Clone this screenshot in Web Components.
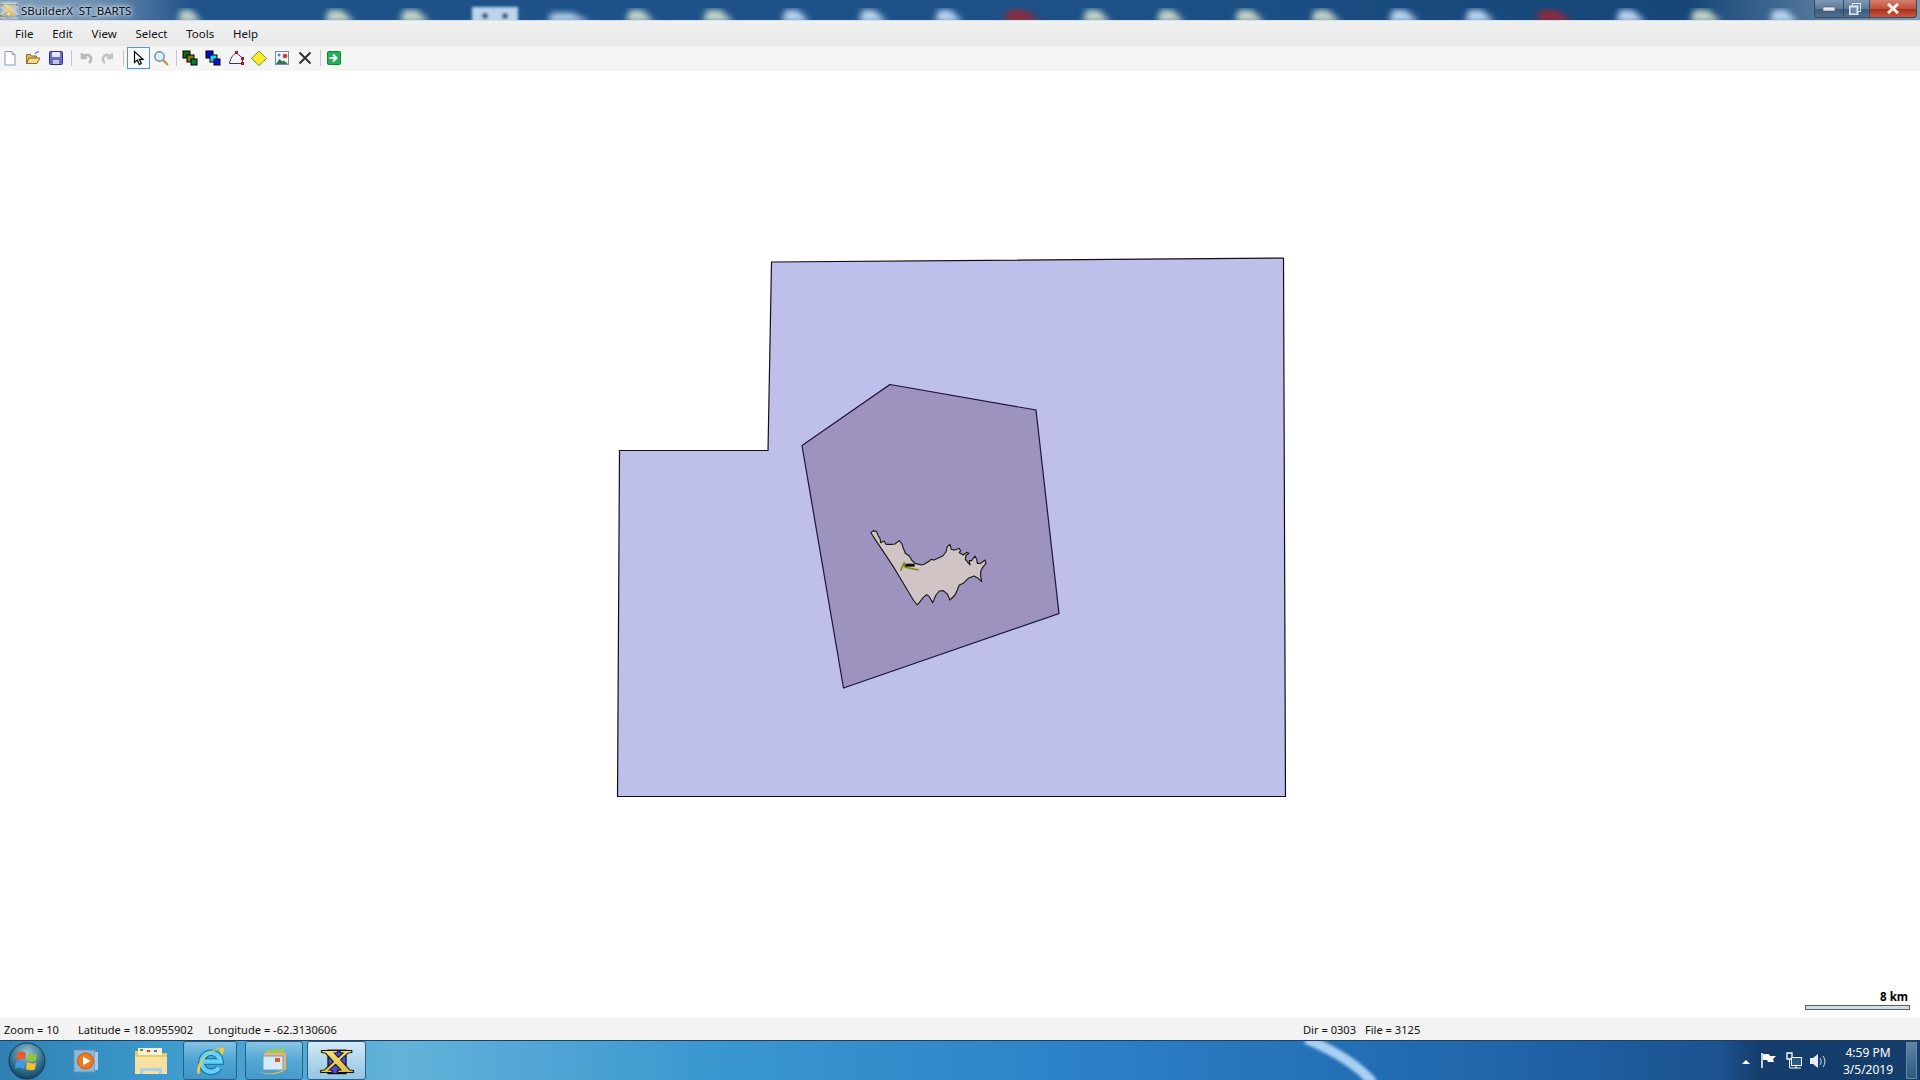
<!DOCTYPE html>
<html>
<head>
<meta charset="utf-8">
<title>SBuilderX</title>
<style>
  html, body { margin: 0; height: 100%; overflow: hidden; background: #fff; }
  body { display: flex; flex-direction: column; width: 1920px; height: 1080px; font: 11px "Noto Sans", "Open Sans", sans-serif; color: #111; }
</style>
</head>
<body>
<sb-titlebar>SBuilderX&nbsp; ST_BARTS</sb-titlebar>
<sb-menubar></sb-menubar>
<sb-toolbar></sb-toolbar>
<sb-map></sb-map>
<sb-statusbar></sb-statusbar>
<win-taskbar></win-taskbar>

<script>
const logoX = (size) => `
  <svg width="${size}" height="${size}" viewBox="0 0 20 20">
    <defs><linearGradient id="gold" x1="0" y1="0" x2="0" y2="1"><stop offset="0" stop-color="#fbee8c"/><stop offset="1" stop-color="#d8b030"/></linearGradient></defs>
    <rect x="5" y="4" width="10" height="13" fill="#4c4ce0" stroke="#111" stroke-width=".7"/>
    <text transform="translate(10 16.300) scale(1.400 1)" text-anchor="middle" font-family="Liberation Serif" font-weight="700" font-size="18"
      fill="url(#gold)" stroke="#111" stroke-width="1" paint-order="stroke">X</text>
  </svg>`;

customElements.define("sb-titlebar", class extends HTMLElement {
  constructor() {
    super();
    this.shadow = this.attachShadow({ mode: "open" });
  }
  connectedCallback() {
    // blurred desktop icons showing through the aero glass
    const blobs = [[178,24,"g"],[325,30,"g"],[400,30,"g"],[547,44,"b",13],[626,29,"g"],[703,31,"g"],[782,28,"b"],[859,28,"b"],[935,28,"b"],[1004,38,"r"],[1083,28,"g"],[1157,28,"g"],[1235,30,"g"],[1311,30,"g"],[1389,30,"b"],[1465,30,"b"],[1536,37,"r"],[1616,30,"b"],[1690,32,"g"],[1770,28,"b"]];
    const fill = { g: "#c4d6c8", b: "#bcd6f4", r: "#8c2c3c" };
    const shapes = blobs.map(([x, w, c, top = 10]) =>
      `<polygon points="${x},22 ${x + w * 0.12},${top} ${x + w * 0.55},${top} ${x + w},22" fill="${fill[c]}"/>`).join("");
    this.shadow.innerHTML = `
      <style>
        :host { display: flex; height: 20px; flex: none; position: relative; overflow: hidden;
          background: linear-gradient(90deg, #7f9cb8 0, #6e8fb0 5%, #1f5289 10%, #1c5086 60%, #164577 88%, #5f82a2 96%, #7d99b2 100%);
          border-bottom: 1px solid #d4e0ea; box-sizing: content-box; }
        svg.glass { position: absolute; inset: 0; }
        .title { position: relative; display: flex; align-items: center; gap: 2px; height: 20px;
          font-size: 11.500px; color: #08101c; text-shadow: 0 0 6px #dfe8f0, 0 0 6px #dfe8f0, 0 0 3px #dfe8f0; }
        .title svg { flex: none; }
        .btns { position: absolute; right: 3px; top: 0; display: flex; height: 18px; }
        .btn { display: flex; align-items: center; justify-content: center; box-sizing: border-box; height: 18px;
          border: 1px solid #3a4a5c; border-top: 0; background: linear-gradient(#7d98b2, #5e7b98 50%, #3c5a7a 55%, #50708e); }
        .min { width: 29px; border-radius: 0 0 0 4px; border-right: 0; }
        .max { width: 26px; border-right: 0; padding-right: 4px; }
        .close { width: 48px; border-radius: 0 0 4px 0; background: linear-gradient(#d2806e, #c0503c 50%, #a8301c 55%, #c85a40); }
      </style>
      <svg class="glass" width="1920" height="21"><defs><filter id="b"><feGaussianBlur stdDeviation="3"/></filter><filter id="s"><feGaussianBlur stdDeviation="1.500"/></filter></defs>
        <g filter="url(#b)">${shapes}</g>
        <g filter="url(#s)"><rect x="472" y="7" width="46" height="16" fill="#bcd4f0"/><circle cx="485" cy="16" r="3" fill="#3c4a5c"/><circle cx="505" cy="16" r="3" fill="#3c4a5c"/></g>
      </svg>
      <div class="title">${logoX(19)}<slot></slot></div>
      <div class="btns">
        <div class="btn min"><svg width="12" height="6"><rect width="12" height="4" y="1" fill="#e6e6e6" stroke="#445" stroke-width=".5"/></svg></div>
        <div class="btn max"><svg width="12" height="12" fill="none" stroke="#dfe6ea"><rect x="3.500" y=".5" width="8" height="8"/><rect x=".5" y="3.500" width="8" height="8" fill="#6f8aa4" stroke-width="2"/></svg></div>
        <div class="btn close"><svg width="14" height="11" stroke="#f4f0ee" stroke-width="3"><path d="M2 1 L12 10 M12 1 L2 10"/></svg></div>
      </div>`;
  }
});

customElements.define("sb-menubar", class extends HTMLElement {
  constructor() {
    super();
    this.shadow = this.attachShadow({ mode: "open" });
  }
  connectedCallback() {
    const items = ["File", "Edit", "View", "Select", "Tools", "Help"];
    this.shadow.innerHTML = `
      <style>
        :host { display: flex; flex: none; height: 25px; align-items: center; gap: 18.800px; padding-left: 15px;
          background: linear-gradient(#f0f0f0, #e9e9e9); color: #111; font-size: 11.500px; }
      </style>
      ${items.map(t => `<span>${t}</span>`).join("")}`;
  }
});

customElements.define("sb-toolbar", class extends HTMLElement {
  constructor() {
    super();
    this.shadow = this.attachShadow({ mode: "open" });
  }
  connectedCallback() {
    const icons = {
      newf: `<path d="M3 1.500h7l3 3v10.500H3z" fill="#fff" stroke="#8a9ab0"/><path d="M10 1.500v3h3" fill="#dde6f0" stroke="#8a9ab0"/>`,
      open: `<path d="M1.500 13.500v-9h4l1 1.500h5v7.500z" fill="#e0b860" stroke="#8a6a2a"/><path d="M1.500 13.500l2.500-5.500h11l-3 5.500z" fill="#f6d98a" stroke="#8a6a2a"/><path d="M10 4c1-2 2.500-2.500 4-2" fill="none" stroke="#4a78c0" stroke-width="1.200"/>`,
      save: `<rect x="1.500" y="1.500" width="13" height="13" rx="1" fill="#6a6ac4" stroke="#30307a"/><rect x="4" y="2" width="8" height="5" fill="#e8e8f4"/><rect x="5" y="10" width="6" height="4" fill="#c8c8d8"/>`,
      undo: `<path d="M4 3v5h5M4.500 8C6 4 12 4 13 8c.5 2-.5 4-2 5" fill="none" stroke="#b8b8b8" stroke-width="2.400"/>`,
      redo: `<path d="M12 3v5H7M11.500 8C10 4 4 4 3 8c-.5 2 .5 4 2 5" fill="none" stroke="#c4c4c4" stroke-width="2.400"/>`,
      arrow: `<path d="M4.500 1.500v11l2.800-2.400 2 4.400 2-1-2-4.200h3.700z" fill="#fff" stroke="#000" stroke-width="1.200"/>`,
      zoom: `<circle cx="6.500" cy="6.500" r="4.700" fill="#d8ecfa" stroke="#6a8aa8" stroke-width="1.400"/><path d="M10 10l5 5" stroke="#c09048" stroke-width="2.400"/>`,
      layerg: `<rect x="1" y="1" width="7" height="7" fill="#0a6a1a" stroke="#000"/><rect x="5" y="5" width="7" height="7" fill="#7a7a10" stroke="#000"/><rect x="9" y="9" width="6" height="6" fill="#0a7a2a" stroke="#000"/>`,
      layerb: `<rect x="1" y="1" width="7" height="7" fill="#0808d8" stroke="#000"/><rect x="5" y="5" width="7" height="7" fill="#10e0f0" stroke="#000"/><rect x="9" y="9" width="6" height="6" fill="#1010e0" stroke="#000"/>`,
      poly: `<path d="M1.500 13.500C2 9 5 4 8.500 3L14.500 8v5.500z" fill="none" stroke="#3030a0"/><rect x="7" y="1" width="3" height="3" fill="#c01020"/><rect x="13" y="7" width="3" height="3" fill="#c01020"/><rect x="13" y="12" width="3" height="3" fill="#c01020"/>`,
      diamond: `<path d="M8 1L15.500 8.500 8 15.500.5 8.500z" fill="#f6ec30" stroke="#8a8a20"/>`,
      image: `<rect x="1.500" y="1.500" width="13" height="13" fill="#f4f4fa" stroke="#7a8aa0"/><circle cx="11" cy="6" r="2.300" fill="#d04040"/><path d="M2 14l3.500-5 3 2.500 1.500-1 4 3.500z" fill="#2a7a5a"/><circle cx="5" cy="5" r="1.500" fill="#5a8ad0"/>`,
      del: `<path d="M2.500 2.500l11 11M13.500 2.500l-11 11" stroke="#333" stroke-width="2"/>`,
      go: `<rect x="1.500" y="1.500" width="13" height="13" rx="1" fill="#1fb050" stroke="#0a8a3a"/><path d="M3.500 8h5M7 4.500L10.500 8 7 11.500" fill="none" stroke="#fff" stroke-width="2"/>`
    };
    // name, left gap in px before the button
    const row = [["newf",-1.5],["open",0],["save",0],["sep"],["undo",0],["redo",-1],["sep"],["arrow",0],["zoom",0],["sep"],["layerg",-1],["layerb",0],["poly",0],["diamond",0],["image",0],["del",0],["sep"],["go",-1]];
    const html = row.map(([n, gap]) => {
      if (n === "sep") return `<i></i>`;
      return `<span class="${n === "arrow" ? "on" : ""}" style="margin-left:${gap}px"><svg width="16" height="16" viewBox="0 0 16 16">${icons[n]}</svg></span>`;
    }).join("");
    this.shadow.innerHTML = `
      <style>
        :host { display: flex; flex: none; height: 25px; box-sizing: border-box; padding-bottom: 2px; align-items: center;
          background: #f5f5f5; }
        span { display: flex; align-items: center; justify-content: center; width: 23px; height: 22px; box-sizing: border-box; }
        span.on { border: 1px solid #4a98e0; background: #f8fbfe; }
        i { display: block; width: 1px; height: 16px; margin: 0 3px; background: #c8c8c8; }
      </style>
      ${html}`;
  }
});

customElements.define("sb-map", class extends HTMLElement {
  constructor() {
    super();
    this.shadow = this.attachShadow({ mode: "open" });
  }
  connectedCallback() {
    const island = "33,38 40,32 50,35 55,48 60,55 62,68 72,63 78,73 95,73 105,72 118,62 126,72 130,85 136,100 148,108 155,120 165,130 185,135 192,133 207,124 213,118 222,120 248,108 258,96 262,80 270,73 274,88 285,90 297,85 302,92 298,98 310,105 320,97 327,100 318,106 316,118 322,125 330,135 328,122 335,122 345,108 350,118 352,130 362,130 375,120 378,130 368,142 362,155 362,168 365,185 355,175 342,168 325,175 310,190 298,195 292,210 285,225 270,240 262,222 250,212 238,213 228,225 218,248 208,230 200,224 190,232 178,248 172,255 160,240 130,190 100,140 70,95 40,50";
    this.shadow.innerHTML = `
      <style>
        :host { display: block; flex: 1; position: relative; background: #fff; }
        svg { position: absolute; inset: 0; }
        .scale { position: absolute; right: 10px; bottom: 8px; width: 105px; text-align: right; }
        .scale b { display: block; margin-right: 2px; font: 700 11.500px/14px "Noto Sans", sans-serif; color: #000; }
        .scale div { height: 5px; box-sizing: border-box; border: 1px solid #5a5f66; background: #d4dce4; margin-top: 1px; }
      </style>
      <svg width="1920" height="947" viewBox="0 71 1920 947">
        <polygon points="771.500,262 1283.500,258 1285.500,796.500 617.500,796.500 619.500,450.500 768,450.500" fill="#bfbfec" stroke="#111" stroke-width="1.200"/>
        <polygon points="890,384.500 1036,410 1059,613.500 843.500,688 802,445.500" fill="#9e92be" stroke="#1c1440" stroke-width="1.200"/>
        <g transform="translate(860 520) scale(.3333)">
          <polygon points="${island}" fill="#d0c4c4" stroke="#1a1a1a" stroke-width="3.400" stroke-linejoin="round"/>
          <path d="M122 152l10-22 4 12 40 8" fill="none" stroke="#7c8c10" stroke-width="5"/>
          <rect x="136" y="131" width="28" height="9" fill="#111"/>
        </g>
      </svg>
      <div class="scale"><b>8 km</b><div></div></div>`;
  }
});

customElements.define("sb-statusbar", class extends HTMLElement {
  constructor() {
    super();
    this.shadow = this.attachShadow({ mode: "open" });
  }
  connectedCallback() {
    this.shadow.innerHTML = `
      <style>
        :host { display: flex; flex: none; height: 22px; align-items: center; background: #f3f3f3; color: #111; font-size: 11.100px; white-space: nowrap; }
        span { display: block; }
      </style>
      <span style="width:74px;padding-left:4px">Zoom = 10</span>
      <span style="width:130px">Latitude = 18.0955902</span>
      <span style="width:1095px">Longitude = -62.3130606</span>
      <span style="width:62px">Dir = 0303</span>
      <span>File = 3125</span>`;
  }
});

customElements.define("win-taskbar", class extends HTMLElement {
  constructor() {
    super();
    this.shadow = this.attachShadow({ mode: "open" });
  }
  connectedCallback() {
    this.shadow.innerHTML = `
      <style>
        :host { display: flex; flex: none; height: 40px; align-items: stretch; position: relative; overflow: hidden; box-sizing: border-box;
          border-top: 1px solid #1f3f60; color: #fff;
          background: linear-gradient(90deg, #2f7fb4 0, #3d9ccd 170px, #63b2da 400px, #3b98cf 700px, #2b80c6 1100px, #2065aa 1500px, #1b528f 1720px, #153d6c 1760px, #153d6c 100%); }
        .arc { position: absolute; inset: 0; }
        .orb { width: 54px; display: flex; align-items: center; justify-content: center; position: relative; }
        .pin { display: flex; align-items: center; justify-content: center; box-sizing: border-box; position: relative; height: 39px; }
        .box { border: 1px solid #2a5f88; border-radius: 3px; background: linear-gradient(#a4d2eab0, #5aa8d470 50%, #3a8cc470); }
        .act { background: linear-gradient(#d4eaf6, #b0d6ec 50%, #94c6e4); }
        .tray { margin-left: auto; display: flex; align-items: center; position: relative; }
        .clock { width: 76px; text-align: center; font-size: 12px; line-height: 17px; }
        .desk { width: 11px; height: 37px; margin-right: 3px; box-sizing: border-box; border: 1px solid #6a88a4; background: linear-gradient(#5f83a4, #2f5a85); }
      </style>
      <svg class="arc" width="1920" height="40"><defs><filter id="a"><feGaussianBlur stdDeviation="1.500"/></filter></defs>
        <path d="M1306 -2C1335 10 1358 24 1373 42" stroke="#a8d0f2" stroke-width="10" fill="none" filter="url(#a)"/></svg>
      <div class="orb"><svg width="38" height="38" viewBox="0 0 38 38">
        <defs><radialGradient id="o" cx=".5" cy=".3" r=".8"><stop offset="0" stop-color="#9cc8d8"/><stop offset=".6" stop-color="#2c6a8c"/><stop offset="1" stop-color="#0e3048"/></radialGradient></defs>
        <circle cx="19" cy="19" r="18" fill="url(#o)" stroke="#16384e"/>
        <path d="M9 11c3-2 6-2 9 0l-1 7c-3-1.500-6-1.500-9 0z" fill="#e85a30"/>
        <path d="M20 11c3 2 6 2 9 .5l-1 7c-3 1.500-6 1-9-.5z" fill="#8cc83a"/>
        <path d="M8 20c3-1.500 6-1.500 9 0l-1 7c-3-2-6-2-9 0z" fill="#3a9ce0"/>
        <path d="M19 20c3 1.500 6 2 9 .5l-1 7c-3 1-6 1-9-.5z" fill="#f4c030"/>
      </svg></div>
      <div class="pin" style="width:64px"><svg width="26" height="28" viewBox="0 0 26 28">
        <rect x="1" y="3" width="21" height="22" fill="#8cb8dc" stroke="#6a94b8"/>
        <rect x="22" y="5" width="3" height="18" fill="#a8cce6"/>
        <circle cx="12.500" cy="14" r="8" fill="#f07818" stroke="#c05a10"/>
        <path d="M10 9.500v9l7.500-4.500z" fill="#fff"/>
      </svg></div>
      <div class="pin" style="width:66px"><svg width="34" height="30" viewBox="0 0 34 30">
        <path d="M1 5h10l2 2h20v21H1z" fill="#e8c870"/>
        <rect x="4" y="2" width="24" height="7" fill="#f8f0d0"/><rect x="6" y="3" width="3" height="2" fill="#2aa84a"/><rect x="13" y="4" width="3" height="2" fill="#d04030"/><rect x="20" y="4" width="3" height="2" fill="#3a80d0"/>
        <path d="M1 11h32v17H1z" fill="#f8e0a0"/>
        <path d="M6 22h22v6h-3v-3H9v3H6z" fill="#a8d0e8"/>
      </svg></div>
      <div class="pin box" style="width:54px;margin-left:-1px"><svg width="32" height="32" viewBox="0 0 32 32">
        <path d="M25 22.500a9.500 9.500 0 1 1 1.500-6H8" fill="none" stroke="#0f6ea8" stroke-width="6.500"/>
        <path d="M25 22.500a9.500 9.500 0 1 1 1.500-6H8" fill="none" stroke="#63d2f8" stroke-width="4.500"/>
        <path d="M4 29C0 21 12 5 29 2c-5 2-9 4-11 5C11 10 6 18 5.500 29z" fill="#f6cc30"/>
        <path d="M25 4c3-2 6-2 5 2l-2 4-2-3z" fill="#f6cc30"/>
      </svg></div>
      <div class="pin box" style="width:58px;margin-left:8px"><svg width="32" height="30" viewBox="0 0 32 30">
        <rect x="9" y="3" width="18" height="16" fill="#9ac86a" transform="rotate(-8 18 11)"/>
        <rect x="6" y="7" width="22" height="16" fill="#f0b070"/>
        <rect x="5" y="10" width="20" height="14" fill="#d8ecf8" stroke="#6a9cc8"/>
        <rect x="17" y="12" width="5" height="4" fill="#e05a20"/>
        <path d="M1 25c8 4 18 3 28-3-4 6-20 9-28 3z" fill="#f0c040"/>
      </svg></div>
      <div class="pin box act" style="width:59px;margin-left:4px">${logoX(36)}</div>
      <div class="tray">
        <svg width="88" height="20" viewBox="0 0 88 20">
          <path d="M0 13l4-4 4 4z" fill="#fff"/>
          <path d="M20 2v15" stroke="#fff" stroke-width="1.500"/><path d="M21 3h6l1 2h6l-3 3 1 3h-6l-1-2h-4z" fill="#fff"/>
          <path d="M45 2h5v6h-5z" fill="none" stroke="#fff" stroke-width="1.300"/><path d="M47.500 8v9M48 17h11M54 14v3" stroke="#fff"/><rect x="49.500" y="6.500" width="10" height="8" fill="#2c5a88" stroke="#fff"/>
          <path d="M68 7h3l5-4v14l-5-4h-3z" fill="#e8eef8"/><path d="M78 7c1.500 2 1.500 5 0 7M81 5c2.500 3 2.500 8 0 11" fill="none" stroke="#d8e0ea"/>
        </svg>
        <div class="clock">4:59 PM<br>3/5/2019</div>
        <div class="desk"></div>
      </div>`;
  }
});
</script>
</body>
</html>
